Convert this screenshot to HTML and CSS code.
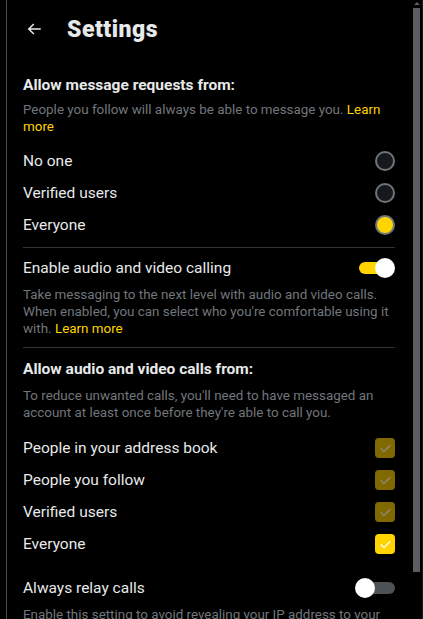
FILE: index.html
```html
<!DOCTYPE html>
<html>
<head>
<meta charset="utf-8">
<link rel="stylesheet" href="styles.css">
</head>
<body>
<div class="frame">
  <div class="panel">
    <header class="header">
      <svg class="back" viewBox="0 0 24 24"><path d="M7.414 13l5.043 5.04-1.414 1.42L3.586 12l7.457-7.46 1.414 1.42L7.414 11H21v2H7.414z"/></svg>
      <h1 class="title">Settings</h1>
    </header>

    <section class="section first">
      <h2 class="heading">Allow message requests from:</h2>
      <p class="desc">People you follow will always be able to message you. <span class="link">Learn more</span></p>
      <div class="options">
        <div class="row"><span>No one</span><span class="radio"></span></div>
        <div class="row"><span>Verified users</span><span class="radio"></span></div>
        <div class="row"><span>Everyone</span><span class="radio on"></span></div>
      </div>
    </section>

    <section class="section bordered">
      <div class="row toggle-row"><span>Enable audio and video calling</span><span class="toggle on"><span class="knob"></span></span></div>
      <p class="desc tight">Take messaging to the next level with audio and video calls. When enabled, you can select who you're comfortable using it with. <span class="link">Learn more</span></p>
    </section>

    <section class="section bordered calls">
      <h2 class="heading">Allow audio and video calls from:</h2>
      <p class="desc">To reduce unwanted calls, you'll need to have messaged an account at least once before they're able to call you.</p>
      <div class="options">
        <div class="row"><span>People in your address book</span><span class="check dim"><svg viewBox="0 0 24 24"><path d="M5 12.5l4.5 4.5L19 7.5"/></svg></span></div>
        <div class="row"><span>People you follow</span><span class="check dim"><svg viewBox="0 0 24 24"><path d="M5 12.5l4.5 4.5L19 7.5"/></svg></span></div>
        <div class="row"><span>Verified users</span><span class="check dim"><svg viewBox="0 0 24 24"><path d="M5 12.5l4.5 4.5L19 7.5"/></svg></span></div>
        <div class="row"><span>Everyone</span><span class="check"><svg viewBox="0 0 24 24"><path d="M5 12.5l4.5 4.5L19 7.5"/></svg></span></div>
      </div>
    </section>

    <section class="section relay">
      <div class="row toggle-row"><span>Always relay calls</span><span class="toggle"><span class="knob"></span></span></div>
      <p class="desc tight">Enable this setting to avoid revealing your IP address to your contacts during calls.</p>
    </section>
  </div>
  <div class="scrollbar">
    <div class="arrow"></div>
    <div class="thumb"></div>
  </div>
</div>
</body>
</html>
```

FILE: styles.css
```css
html, body {
  margin: 0;
  background: #000;
  height: 100%;
  overflow: hidden;
}
body {
  font-family: Roboto, "Liberation Sans", sans-serif;
  color: #e7e9ea;
}
.frame {
  display: flex;
  height: 619px;
  padding-left: 6px;
}
.panel {
  flex: 1;
  border-left: 1px solid #4a4a4a;
  padding: 0 17px 0 16px;
  overflow: hidden;
}
.header {
  display: flex;
  align-items: center;
  height: 58px;
}
.back {
  width: 18px;
  height: 18px;
  fill: #e7e9ea;
  margin-left: 2px;
  margin-right: 24px;
}
.title {
  margin: 0;
  font-size: 23px;
  font-weight: 900;
  letter-spacing: 0.5px;
}
.section.first {
  padding-bottom: 6px;
}
.bordered {
  border-top: 1px solid #2f3336;
}
.heading {
  margin: 17px 0 0;
  font-size: 15.5px;
  font-weight: 700;
  line-height: 20px;
}
.bordered .heading {
  margin-top: 11px;
}
.desc {
  margin: 7px 0 0;
  font-size: 13.4px;
  line-height: 16.5px;
  color: #71767b;
}
.calls .desc {
  margin-top: 9px;
}
.desc.tight {
  margin: 0 0 10px;
  line-height: 17px;
}
.link {
  color: #ffd400;
}
.options {
  margin-top: 10px;
}
.calls .options {
  margin-top: 11px;
}
.row {
  display: flex;
  align-items: center;
  justify-content: space-between;
  height: 32px;
  font-size: 15.5px;
}
.radio {
  box-sizing: border-box;
  width: 20px;
  height: 20px;
  border-radius: 50%;
  border: 2px solid #6e767d;
  background: #16181c;
}
.radio.on {
  background: #ffd400;
}
.toggle-row {
  height: 36px;
  margin-top: 2px;
}
.toggle {
  position: relative;
  width: 40px;
  height: 20px;
  display: flex;
  align-items: center;
}
.toggle::before {
  content: "";
  position: absolute;
  left: 4px;
  right: 0;
  height: 12px;
  border-radius: 6px;
  background: #4e5155;
}
.toggle.on::before {
  background: #ffd400;
  right: 4px;
}
.knob {
  position: absolute;
  left: 0;
  width: 20px;
  height: 20px;
  border-radius: 50%;
  background: #fff;
}
.toggle.on .knob {
  left: 20px;
}
.relay {
  margin-top: 10px;
}
.check {
  width: 20px;
  height: 20px;
  border-radius: 4px;
  background: #ffd400;
  display: flex;
  align-items: center;
  justify-content: center;
}
.check svg {
  width: 15px;
  height: 15px;
  fill: none;
  stroke: #fff;
  stroke-width: 2.2;
  stroke-linecap: round;
  stroke-linejoin: round;
}
.check.dim {
  background: #806a00;
}
.check.dim svg {
  stroke: #8e8a80;
}
.scrollbar {
  width: 10px;
  background: #000;
  border-right: 1px solid #1a1a1a;
}
.arrow {
  width: 0;
  height: 0;
  margin: 2px auto 0;
  border-left: 3px solid transparent;
  border-right: 3px solid transparent;
  border-bottom: 3px solid #5b5d63;
}
.thumb {
  margin: 3px 2px 0 1px;
  height: 564px;
  background: #5b5d63;
}
```
